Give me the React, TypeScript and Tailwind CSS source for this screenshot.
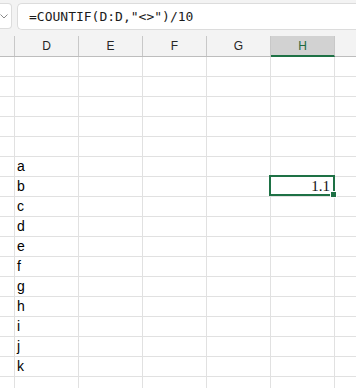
import React from 'react'

const cols = ['D', 'E', 'F', 'G', 'H']
const letters = ['', '', '', '', '', 'a', 'b', 'c', 'd', 'e', 'f', 'g', 'h', 'i', 'j', 'k', '']

export default function App() {
  return (
    <div className="w-[356px] h-[388px] overflow-hidden bg-white">
      {/* formula bar */}
      <div className="h-[36px] bg-[#f3f3f3] flex items-start gap-[5px] pt-[3px]">
        <div className="w-[12px] h-[26px] bg-white border border-l-0 border-[#dcdcdc] rounded-r-[4px] flex items-center justify-center">
          <svg width="8" height="5" viewBox="0 0 8 5" fill="none" className="ml-[-3px]">
            <path d="M0.5 0.5 L4 4 L7.5 0.5" stroke="#8a8a8a" strokeWidth="1" />
          </svg>
        </div>
        <div className="flex-1 h-[27px] bg-white border border-r-0 border-[#dcdcdc] rounded-l-[5px] flex items-center pl-[11px] text-[13px] text-[#1b1b1b] [font-family:'DejaVu_Sans_Mono',monospace]">
          =COUNTIF(D:D,"&lt;&gt;")/10
        </div>
      </div>

      {/* column headers */}
      <div className="flex h-[21px] bg-[#f3f3f3] border-b border-[#bdbdbd] text-[12px] text-[#262626] [font-family:'Liberation_Sans',Arial,sans-serif]">
        <div className="w-[15px] shrink-0 border-r border-[#c8c8c8]" />
        {cols.map((c) => (
          <div
            key={c}
            className={
              c === 'H'
                ? 'w-[64px] shrink-0 flex items-center justify-center border-r border-[#c8c8c8] bg-[#d2d2d2] text-[#1e6b3f] border-b-2 border-b-[#1e7145] -mb-[1px]'
                : 'w-[64px] shrink-0 flex items-center justify-center border-r border-[#c8c8c8]'
            }
          >
            {c}
          </div>
        ))}
        <div className="flex-1" />
      </div>

      {/* rows */}
      <div className="[font-family:'Liberation_Sans',Arial,sans-serif] text-[14px] text-black">
        {letters.map((l, i) => (
          <div key={i} className="flex h-[20px]">
            <div className="w-[15px] shrink-0 border-r border-b border-[#e1e1e1]" />
            <div className="w-[64px] shrink-0 border-r border-b border-[#e1e1e1] pl-[2px] leading-[19px]">
              {l}
            </div>
            <div className="w-[64px] shrink-0 border-r border-b border-[#e1e1e1]" />
            <div className="w-[64px] shrink-0 border-r border-b border-[#e1e1e1]" />
            <div className="w-[64px] shrink-0 border-r border-b border-[#e1e1e1]" />
            <div className="w-[64px] shrink-0 border-r border-b border-[#e1e1e1] relative">
              {l === 'b' && (
                <>
                  <div className="absolute -left-[2px] -right-[1px] -top-[2px] bottom-0 border-2 border-[#1e7145]" />
                  <div className="absolute right-[4px] top-0 h-[19px] leading-[19px] text-[15px] text-[#111] [font-family:'Liberation_Serif',serif]">
                    1.1
                  </div>
                  <div className="absolute z-10 -right-[3px] -bottom-[2px] w-[7px] h-[7px] bg-[#1e7145] border border-white" />
                </>
              )}
            </div>
            <div className="flex-1 border-b border-[#e1e1e1]" />
          </div>
        ))}
      </div>
    </div>
  )
}
